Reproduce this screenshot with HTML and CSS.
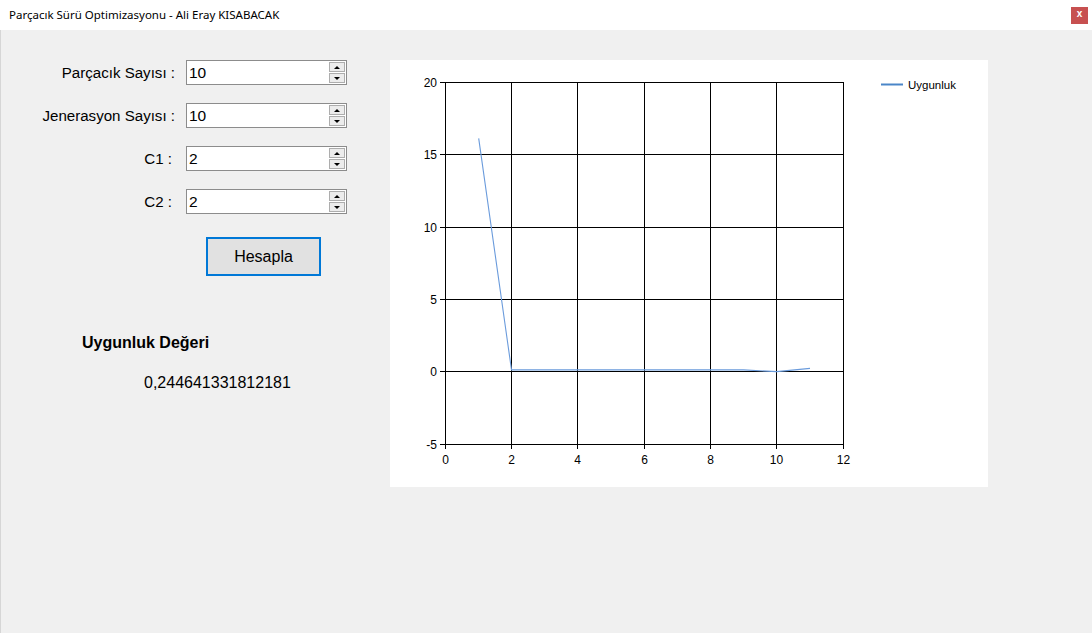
FILE: index.html
```html
<!DOCTYPE html>
<html lang="tr">
<head>
<meta charset="utf-8">
<title>Parçacık Sürü Optimizasyonu - Ali Eray KISABACAK</title>
<link rel="stylesheet" href="styles.css">
</head>
<body>
<div class="window">
  <div class="titlebar">
    <span class="title">Parçacık Sürü Optimizasyonu - Ali Eray KISABACAK</span>
    <span class="close">x</span>
  </div>
  <div class="content">
    <div class="left">
      <div class="form">
        <label class="lbl">Parçacık Sayısı :</label>
        <div class="num"><span class="val">10</span><div class="spin"><span class="sbtn up"></span><span class="sbtn down"></span></div></div>
        <label class="lbl">Jenerasyon Sayısı :</label>
        <div class="num"><span class="val">10</span><div class="spin"><span class="sbtn up"></span><span class="sbtn down"></span></div></div>
        <label class="lbl lbl-c">C1 :</label>
        <div class="num"><span class="val">2</span><div class="spin"><span class="sbtn up"></span><span class="sbtn down"></span></div></div>
        <label class="lbl lbl-c">C2 :</label>
        <div class="num"><span class="val">2</span><div class="spin"><span class="sbtn up"></span><span class="sbtn down"></span></div></div>
      </div>
      <button class="btn">Hesapla</button>
      <div class="result-title">Uygunluk Değeri</div>
      <div class="result-value">0,244641331812181</div>
    </div>
    <div class="chart">
      <svg class="chart-svg" width="598" height="427" viewBox="0 0 598 427">
        <g class="grid" stroke="#000" stroke-width="1" shape-rendering="crispEdges">
          <line x1="55.5" y1="22" x2="55.5" y2="389"/>
          <line x1="121.5" y1="22" x2="121.5" y2="389"/>
          <line x1="187.5" y1="22" x2="187.5" y2="389"/>
          <line x1="254.5" y1="22" x2="254.5" y2="389"/>
          <line x1="320.5" y1="22" x2="320.5" y2="389"/>
          <line x1="386.5" y1="22" x2="386.5" y2="389"/>
          <line x1="453.5" y1="22" x2="453.5" y2="389"/>
          <line x1="50" y1="22.5" x2="454" y2="22.5"/>
          <line x1="50" y1="94.5" x2="454" y2="94.5"/>
          <line x1="50" y1="167.5" x2="454" y2="167.5"/>
          <line x1="50" y1="239.5" x2="454" y2="239.5"/>
          <line x1="50" y1="311.5" x2="454" y2="311.5"/>
          <line x1="50" y1="384.5" x2="454" y2="384.5"/>
        </g>
        <g class="ylabels" font-family="Liberation Sans, Arial, sans-serif" font-size="12" text-anchor="end" fill="#000">
          <text x="47" y="26.5">20</text>
          <text x="47" y="99">15</text>
          <text x="47" y="171.5">10</text>
          <text x="47" y="244">5</text>
          <text x="47" y="316">0</text>
          <text x="47" y="389">-5</text>
        </g>
        <g class="xlabels" font-family="Liberation Sans, Arial, sans-serif" font-size="12" text-anchor="middle" fill="#000">
          <text x="55.5" y="404">0</text>
          <text x="121.5" y="404">2</text>
          <text x="187.5" y="404">4</text>
          <text x="254.5" y="404">6</text>
          <text x="320.5" y="404">8</text>
          <text x="386.5" y="404">10</text>
          <text x="453.5" y="404">12</text>
        </g>
        <polyline fill="none" stroke="#6a9bdc" stroke-width="1.1" points="88.7,78.3 121.5,309.9 154.6,309.9 187.8,309.9 221,309.9 254,309.9 287.3,309.9 320.5,309.9 353.6,309.9 386.8,311.6 420,308.4"/>
        <line x1="491" y1="24.5" x2="513" y2="24.5" stroke="#4a86c8" stroke-width="2"/>
        <text x="518" y="29" font-family="Liberation Sans, Arial, sans-serif" font-size="11.5" fill="#000">Uygunluk</text>
      </svg>
    </div>
  </div>
</div>
</body>
</html>
```

FILE: styles.css
```css
html, body {
  margin: 0;
  padding: 0;
}

body {
  background: #f0f0f0;
  font-family: "Liberation Sans", Arial, sans-serif;
  color: #000;
}

.window {
  width: 1092px;
  height: 633px;
  overflow: hidden;
  display: flex;
  flex-direction: column;
}

.titlebar {
  height: 30px;
  flex-shrink: 0;
  background: #fff;
  display: flex;
  align-items: center;
  justify-content: space-between;
  padding: 0 4px 0 9px;
  box-sizing: border-box;
}

.title {
  font-family: "Noto Sans", "Open Sans", sans-serif;
  font-size: 11.5px;
  color: #000;
  line-height: 16px;
}

.close {
  width: 17px;
  height: 17px;
  background: #c75050;
  color: #fff;
  font-family: "Liberation Sans", Arial, sans-serif;
  font-size: 10px;
  font-weight: bold;
  display: flex;
  align-items: center;
  justify-content: center;
  line-height: 1;
  padding-bottom: 2px;
  box-sizing: border-box;
}

.content {
  flex: 1;
  display: flex;
  align-items: flex-start;
  padding-top: 30px;
  box-shadow: inset 1px 0 0 #d6d6d6;
}

.left {
  width: 390px;
  flex-shrink: 0;
}

.form {
  display: grid;
  grid-template-columns: 175px 161px;
  grid-auto-rows: 25px;
  column-gap: 11px;
  row-gap: 18px;
}

.lbl {
  justify-self: end;
  align-self: center;
  font-size: 15.1px;
  line-height: 18px;
  white-space: nowrap;
}

.lbl-c {
  padding-right: 3px;
}

.num {
  display: flex;
  align-items: center;
  background: #fff;
  border: 1px solid #8c8c8c;
  box-sizing: border-box;
  height: 25px;
}

.val {
  flex: 1;
  padding-left: 2px;
  font-size: 15.5px;
  line-height: 18px;
}

.spin {
  width: 16px;
  height: 21px;
  margin-right: 1px;
  display: flex;
  flex-direction: column;
  gap: 1px;
}

.sbtn {
  flex: 1;
  border: 1px solid #adadad;
  background: #ececec;
  display: flex;
  align-items: center;
  justify-content: center;
}

.sbtn::after {
  content: "";
  width: 0;
  height: 0;
  border-left: 3px solid transparent;
  border-right: 3px solid transparent;
}

.up::after {
  border-bottom: 3px solid #000;
}

.down::after {
  border-top: 3px solid #000;
}

.btn {
  display: block;
  margin: 23px 0 0 206px;
  width: 115px;
  height: 39px;
  padding: 0;
  border: 2px solid #0078d7;
  background: #e1e1e1;
  font-family: "Liberation Sans", Arial, sans-serif;
  font-size: 16px;
  color: #000;
}

.result-title {
  margin: 57px 0 0 82px;
  font-size: 16px;
  font-weight: bold;
  line-height: 20px;
}

.result-value {
  margin: 20px 0 0 144px;
  font-size: 16px;
  line-height: 20px;
}

.chart {
  width: 598px;
  height: 427px;
  background: #fff;
  flex-shrink: 0;
}

.chart-svg {
  display: block;
}
```
